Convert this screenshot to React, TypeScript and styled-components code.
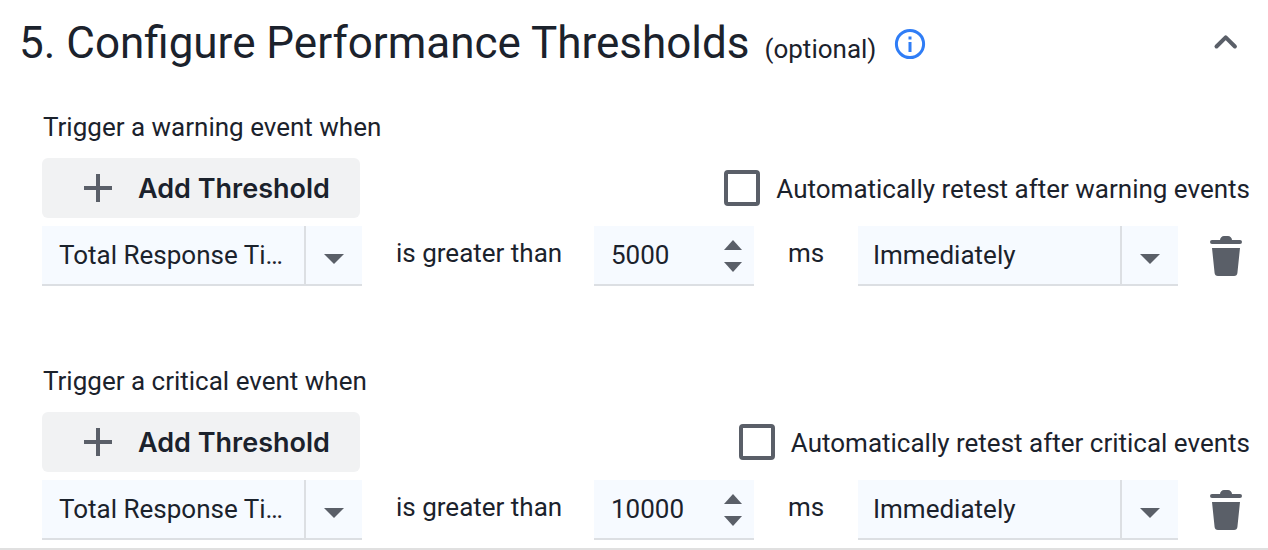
import React, { useId, useState } from "react";
import styled, { createGlobalStyle } from "styled-components";

const ink = "#1b222c";
const iconGrey = "#5a5f68";
const fieldFill = "#f6faff";
const line = "#dcdfe3";

const GlobalStyle = createGlobalStyle`
  *, *::before, *::after { box-sizing: border-box; }
  body {
    margin: 0;
    background: #fff;
    color: ${ink};
    font: 400 26px/32px Roboto, "Liberation Sans", sans-serif;
  }
  button, input, select { font: inherit; color: inherit; margin: 0; }
`;

const Panel = styled.section`
  border-bottom: 2px solid #e0e0e0;
  padding-bottom: 8px;
`;

const Header = styled.header`
  display: flex;
  align-items: baseline;
  padding: 15px 26px 15px 19px;
`;

const Title = styled.h2`
  margin: 0;
  font-size: 44px;
  line-height: 56px;
  font-weight: 400;
`;

const Optional = styled.span`
  margin-left: 15px;
`;

const IconButton = styled.button`
  display: flex;
  flex: none;
  padding: 0;
  border: 0;
  background: none;
  color: ${iconGrey};
  cursor: pointer;
  svg { display: block; }
`;

const InfoButton = styled(IconButton)`
  align-self: center;
  margin-left: 18px;
  padding-top: 2px;
  color: #2f7df6;
`;

const CollapseButton = styled(IconButton)`
  align-self: center;
  margin-left: auto;
`;

const Groups = styled.div`
  display: flex;
  flex-direction: column;
  gap: 79px;
  padding: 25px 18px 0 42px;
`;

const Group = styled.fieldset`
  min-width: 0;
  margin: 0;
  padding: 0;
  border: 0;
`;

const Legend = styled.legend`
  padding: 0 0 0 1px;
  margin-bottom: 15px;
`;

const Actions = styled.div`
  display: flex;
  align-items: center;
  justify-content: space-between;
  margin-bottom: 8px;
`;

const AddButton = styled.button`
  display: flex;
  align-items: center;
  gap: 26px;
  height: 60px;
  padding: 0 30px 0 42px;
  border: 0;
  border-radius: 6px;
  background: #f1f2f3;
  font-family: Inter, "Liberation Sans", sans-serif;
  font-size: 27px;
  font-weight: 600;
  white-space: nowrap;
  cursor: pointer;
  svg { color: ${iconGrey}; }
`;

const CheckLabel = styled.label`
  display: flex;
  align-items: center;
  gap: 16px;
  white-space: nowrap;
`;

const ControlText = styled.span`
  padding-top: 2px;
`;

const Checkbox = styled.input`
  appearance: none;
  flex: none;
  width: 36px;
  height: 36px;
  border: 4px solid ${iconGrey};
  border-radius: 4px;
  background: #fff;
  &:checked { box-shadow: inset 0 0 0 5px #fff; background: ${iconGrey}; }
`;

const Rule = styled.div`
  display: grid;
  grid-template-columns: minmax(0, 1fr) 168px 160px 40px minmax(0, 1fr) 32px;
  column-gap: 32px;
  padding-right: 8px;
`;

const Word = styled.span`
  padding-left: 2px;
  line-height: 54px;
  white-space: nowrap;
`;

const Field = styled.div<{ $aside: number }>`
  display: grid;
  grid-template-columns: minmax(0, 1fr) ${(p) => p.$aside}px;
  height: 60px;
  border-bottom: 2px solid ${line};
  background: ${fieldFill};
`;

const Select = styled.select<{ $indent: number }>`
  appearance: none;
  grid-area: 1 / 1 / 2 / 3;
  min-width: 0;
  padding: 0 74px 0 ${(p) => p.$indent}px;
  border: 0;
  border-radius: 0;
  background: transparent;
  text-overflow: ellipsis;
`;

const Arrow = styled.span`
  grid-area: 1 / 2;
  display: flex;
  align-items: center;
  justify-content: center;
  padding-top: 8px;
  border-left: 2px solid ${line};
  color: ${iconGrey};
  pointer-events: none;
`;

const NumberInput = styled.input`
  appearance: textfield;
  min-width: 0;
  padding: 0 0 0 17px;
  border: 0;
  background: transparent;
  &::-webkit-inner-spin-button { appearance: none; margin: 0; }
`;

const Stepper = styled.div`
  display: flex;
  flex-direction: column;
  align-items: center;
  justify-content: center;
  gap: 12px;
  padding-top: 2px;
`;

const DeleteButton = styled(IconButton)`
  align-self: center;
`;

const Triangle = ({ down = false, width = 18 }: { down?: boolean; width?: number }) => (
  <svg width={width} height="10" viewBox="0 0 18 10" fill="currentColor" preserveAspectRatio="none" aria-hidden="true">
    <path d={down ? "M0 0h18L9 10z" : "M9 0l9 10H0z"} />
  </svg>
);

const Dropdown = ({ label, options, indent }: { label: string; options: string[]; indent: number }) => (
  <Field $aside={58}>
    <Select aria-label={label} $indent={indent}>
      {options.map((o) => (
        <option key={o}>{o}</option>
      ))}
    </Select>
    <Arrow>
      <Triangle down width={20} />
    </Arrow>
  </Field>
);

const ThresholdGroup = ({ level, initial }: { level: string; initial: number }) => {
  const [value, setValue] = useState(initial);
  const id = useId();
  return (
    <Group>
      <Legend>Trigger a {level} event when</Legend>
      <Actions>
        <AddButton type="button">
          <svg width="28" height="28" viewBox="0 0 28 28" fill="none" stroke="currentColor" strokeWidth="4" aria-hidden="true">
            <path d="M14 0v28M0 14h28" />
          </svg>
          <ControlText>Add Threshold</ControlText>
        </AddButton>
        <CheckLabel htmlFor={id}>
          <Checkbox id={id} type="checkbox" />
          <ControlText>Automatically retest after {level} events</ControlText>
        </CheckLabel>
      </Actions>
      <Rule>
        <Dropdown label="Metric" options={["Total Response Time", "Connect Time"]} indent={17} />
        <Word>is greater than</Word>
        <Field $aside={42}>
          <NumberInput
            type="number"
            aria-label="Threshold in milliseconds"
            value={value}
            onChange={(e) => setValue(Number(e.target.value))}
          />
          <Stepper>
            <IconButton type="button" aria-label="Increase" onClick={() => setValue(value + 1)}>
              <Triangle />
            </IconButton>
            <IconButton type="button" aria-label="Decrease" onClick={() => setValue(value - 1)}>
              <Triangle down />
            </IconButton>
          </Stepper>
        </Field>
        <Word>ms</Word>
        <Dropdown label="Delay" options={["Immediately", "After 5 minutes"]} indent={15} />
        <DeleteButton type="button" aria-label="Delete threshold">
          <svg width="32" height="40" viewBox="0 0 32 40" fill="currentColor" aria-hidden="true">
            <path d="M10 4c0-2 2-4 4-4h4c2 0 4 2 4 4h8a2 2 0 0 1 0 4H2a2 2 0 0 1 0-4z" />
            <path d="M2 12h28l-2.6 25a3.4 3.4 0 0 1-3.4 3H8a3.4 3.4 0 0 1-3.4-3z" />
          </svg>
        </DeleteButton>
      </Rule>
    </Group>
  );
};

export default function App() {
  return (
    <>
      <GlobalStyle />
      <Panel>
        <Header>
          <Title>5. Configure Performance Thresholds</Title>
          <Optional>(optional)</Optional>
          <InfoButton type="button" aria-label="More information">
            <svg width="32" height="32" viewBox="0 0 32 32" fill="none" stroke="currentColor" strokeWidth="3" aria-hidden="true">
              <circle cx="16" cy="16" r="13.6" />
              <path d="M16 14v10M16 8.5v3" />
            </svg>
          </InfoButton>
          <CollapseButton type="button" aria-label="Collapse section">
            <svg width="32" height="32" viewBox="0 0 32 32" fill="none" stroke="currentColor" strokeWidth="4" strokeLinecap="round" strokeLinejoin="round" aria-hidden="true">
              <path d="M6.5 19.5l9.2-9.2 9.2 9.2" />
            </svg>
          </CollapseButton>
        </Header>
        <Groups>
          <ThresholdGroup level="warning" initial={5000} />
          <ThresholdGroup level="critical" initial={10000} />
        </Groups>
      </Panel>
    </>
  );
}
